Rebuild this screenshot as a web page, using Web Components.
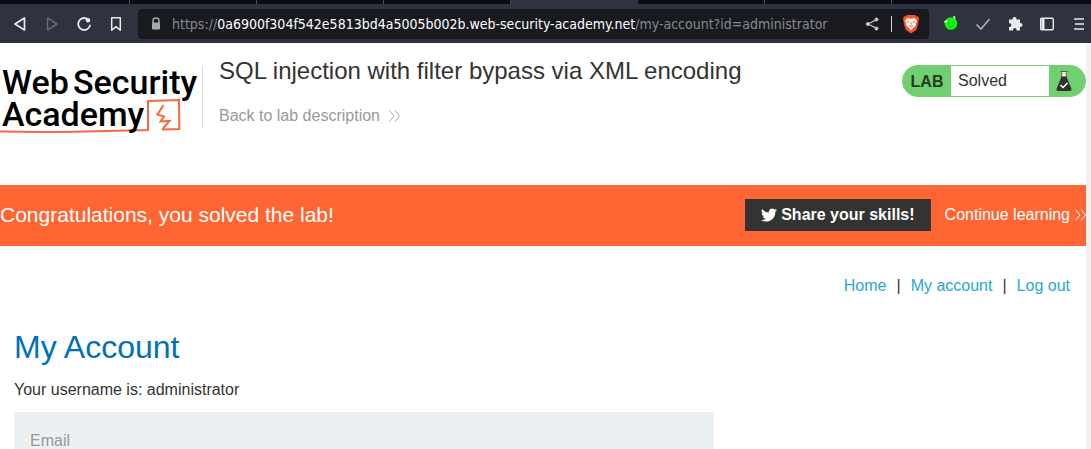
<!DOCTYPE html>
<html lang="en">
<head>
<meta charset="utf-8">
<title>SQL injection with filter bypass via XML encoding</title>
<style>
html, body { height: 100%; margin: 0; }
body { overflow: hidden; background: #fff; color: #333332; font: 16px/24px "Liberation Sans", Arial, sans-serif; }
</style>
</head>
<body>
<browser-window>
  <browser-toolbar slot="chrome"></browser-toolbar>
  <lab-header>
    <academy-logo slot="logo"></academy-logo>
    <span slot="title">SQL injection with filter bypass via XML encoding</span>
    <lab-status slot="status">Solved</lab-status>
  </lab-header>
  <solved-banner>Congratulations, you solved the lab!</solved-banner>
  <account-nav></account-nav>
  <account-page><span slot="user">administrator</span></account-page>
</browser-window>

<script>
function define(name, html) {
  const template = document.createElement('template');
  template.innerHTML = html;
  customElements.define(name, class extends HTMLElement {
    constructor() {
      super();
      this.attachShadow({ mode: 'open' }).append(template.content.cloneNode(true));
    }
  });
}

define('browser-window', `
<style>
:host { display: flex; flex-direction: column; height: 100vh; overflow: hidden; }
.view { display: flex; flex: 1; min-height: 0; }
.page { flex: 1; min-width: 0; overflow: hidden; }
.scroll { width: 5px; background: #f1f1f1; }
</style>
<slot name="chrome"></slot>
<div class="view"><div class="page"><slot></slot></div><div class="scroll"></div></div>`);

define('browser-toolbar', `
<style>
:host { display: block; flex: none; background: #31323f; font: 14px/20px "DejaVu Sans Condensed", "Noto Sans", sans-serif; color: #868a92; }
.tabs { display: flex; height: 4px; background: #0b0c15; }
.tabs i { flex: 0 0 127px; box-sizing: border-box; border-right: 1px solid #4a4b57; }
.tabs i:first-child { flex-basis: 130px; }
.tabs .on { background: #31323f; border: 0; }
.bar { display: flex; align-items: center; height: 39px; padding-left: 4px; box-sizing: border-box; }
button { display: grid; place-items: center; width: 32px; height: 32px; padding: 0; border: 0; background: none; color: #e9eaee; flex: none; }
.menu { width: 28px; justify-content: start; padding-left: 8px; }
.dim { color: #686a76; }
.address { display: flex; align-items: center; flex: 1; min-width: 0; height: 30px; margin: 0 6px; padding: 0 2px 0 12px; border-radius: 4px; background: #181a20; }
.lock { flex: none; margin-right: 10px; }
.url { flex: 1; min-width: 0; white-space: nowrap; overflow: hidden; }
.url b { font-weight: 400; color: #fff; }
.rule { width: 1px; height: 16px; background: #cfd0d4; margin: 0 3px; }
svg { display: block; }
</style>
<div class="tabs"><i></i><i></i><i></i><i></i><i class="on"></i><i></i><i></i></div>
<div class="bar">
  <button aria-label="Back"><svg width="16" height="16" fill="none" stroke="currentColor" stroke-width="1.7" stroke-linejoin="round"><path d="M12.5 2v12L3 8z"/></svg></button>
  <button class="dim" aria-label="Forward"><svg width="16" height="16" fill="none" stroke="currentColor" stroke-width="1.5" stroke-linejoin="round"><path d="M3.5 2v12L13 8z"/></svg></button>
  <button aria-label="Reload"><svg width="16" height="16" fill="none" stroke="currentColor" stroke-width="1.8" stroke-linecap="round"><path d="M11 2.700A6 6 0 1 0 14 9.500"/><circle cx="12" cy="4.300" r="2.200" fill="currentColor" stroke="none"/></svg></button>
  <button aria-label="Bookmark"><svg width="16" height="16" fill="none" stroke="currentColor" stroke-width="1.5" stroke-linejoin="round"><path d="M3.700 1.700h8.600v12.600L8 10.600l-4.300 3.700z"/></svg></button>
  <div class="address">
    <svg class="lock" width="12" height="14"><path d="M3 6V4a3 3 0 0 1 6 0v2" fill="none" stroke="#a5a8af" stroke-width="1.500"/><rect x="2" y="5.500" width="8" height="7" rx="1" fill="#a5a8af"/></svg>
    <span class="url" role="textbox" aria-label="Address">https://<b>0a6900f304f542e5813bd4a5005b002b.web-security-academy.net</b>/my-account?id=administrator</span>
    <button aria-label="Share"><svg width="14" height="14" fill="#c8cad0" stroke="#c8cad0"><path d="M12 2.500L3 7l9 4.500" fill="none" stroke-width="1.300"/><circle cx="11.500" cy="2.500" r="1.500"/><circle cx="2.800" cy="7" r="1.500"/><circle cx="11.500" cy="11.500" r="1.500"/></svg></button>
    <span class="rule"></span>
    <button aria-label="Brave Shields"><svg width="18" height="20"><path d="M5 1h8l1.500 1.500 1.500-.2L17 5l-.6 2 .1 1-2 7.500L9 19.500l-5.500-4L1.500 8l.1-1L1 5l1-2.700 1.500.2z" fill="#fb542b"/><path d="M5.500 4l3.500.8 3.500-.8 2.500 3-1.500 2.500.5 1.500-2.500 2.500L9 16.500l-2.500-3L4 11l.5-1.500L3 7z" fill="#fff"/><path d="M5 7.500l2.500.8M13 7.500l-2.500.8M9 8v3M7 11.700l2 .8 2-.8" stroke="#fb542b" stroke-width="1" fill="none"/></svg></button>
  </div>
  <button aria-label="Green face extension"><svg width="16" height="16"><circle cx="8" cy="7.500" r="6.300" fill="#12f70c"/><path d="M1 5.500l2.500-1.500 1 1.500-2.500 1.500zM10 0l2 .5.500 2.500-1.500-.5z" fill="#eaffea"/><path d="M5 7.500l1.500-.3M9.500 6.500l2-.5M6 10.500q2.500 1 4-1" stroke="#09a412" fill="none"/></svg></button>
  <button aria-label="Check extension"><svg width="16" height="16" fill="none" stroke="#a9abb4" stroke-width="1.700"><path d="M1.500 8.500L6 13l8.500-10"/></svg></button>
  <button aria-label="Extensions"><svg width="16" height="16" fill="currentColor"><path d="M2 3.500h3.500V3a2 2 0 0 1 4 0v.5H13V7h.5a2 2 0 0 1 0 4H13v3.500H9.500V13.700a1.700 1.700 0 0 0-3.400 0v.8H2V11h.5a1.900 1.900 0 0 0 0-3.800H2z"/></svg></button>
  <button aria-label="Sidebar"><svg width="16" height="16" fill="none" stroke="currentColor" stroke-width="1.400"><rect x="1.700" y="2.200" width="12.600" height="11.600" rx="1"/><path d="M4 2.500v11" stroke-width="3"/></svg></button>
  <button class="menu" aria-label="Menu"><svg width="16" height="16" stroke="currentColor" stroke-width="1.700"><path d="M3 3h10M4 8h9M3 13h10"/></svg></button>
</div>`);

define('academy-logo', `
<style>
:host { display: block; width: 202px; height: 88px; }
svg { display: block; }
text { font: 500 34px Roboto, sans-serif; fill: #000; }
</style>
<svg width="202" height="88" role="img" aria-label="Web Security Academy">
  <path d="M0 81.500q35 .8 74 .2l74-1.700V51l31-1 .3 29-17.300.5" fill="none" stroke="#f4693d" stroke-width="2"/>
  <path d="M163.500 55l-6 9.500 6.500 2-3.500 5 9-.5-7 8" fill="none" stroke="#f4693d" stroke-width="2"/>
  <text x="2" y="44">Web</text><text x="73" y="44">Security</text>
  <text x="2" y="76">Academy</text>
</svg>`);

define('lab-header', `
<style>
:host { display: flex; align-items: flex-start; box-sizing: border-box; min-height: 142px; padding-top: 7px; }
.info { flex: 1; min-width: 0; box-sizing: border-box; border-left: 1px solid #dcdcdc; padding-left: 16px; margin-top: 16px; height: 62px; display: flex; flex-direction: column; justify-content: space-between; }
h2 { margin: -11px 0 0; font-size: 24px; line-height: 32px; font-weight: 400; }
a { color: #999; text-decoration: none; display: flex; align-items: center; gap: 8px; }
.status { margin-top: 15px; }
</style>
<div class="logo"><slot name="logo"></slot></div>
<div class="info">
  <h2><slot name="title"></slot></h2>
  <a href="#lab">Back to lab description <svg width="13" height="14" fill="none" stroke="#aaa"><path d="M1.500 1.500L6 7l-4.500 5.500M7 1.500L11.500 7 7 12.500"/></svg></a>
</div>
<div class="status"><slot name="status"></slot></div>`);

define('lab-status', `
<style>
:host { display: flex; align-items: stretch; box-sizing: border-box; width: 184px; height: 32px; border-radius: 16px; border: 1px solid #70cf70; background: #70cf70; overflow: hidden; }
b { width: 48px; line-height: 32px; text-align: center; color: #263b26; }
span { flex: 1; background: #fff; padding-left: 7px; line-height: 30px; }
svg { width: 36px; height: 30px; }
</style>
<b>LAB</b><span><slot></slot></span>
<svg viewBox="0 0 36 30" role="img" aria-label="Flask"><path d="M12.500 6h5v4.500h-5z" fill="#fff"/><path d="M11.500 5.500h7M12.800 6v5M17.200 6v5" stroke="#555" fill="none"/><path d="M12.500 10.500h5l5 12.500q.5 2-1.500 2H9q-2 0-1.500-2z" fill="#333332"/><path d="M11.500 19l2.500 2.500 4.500-4.500" stroke="#fff" stroke-width="1.500" fill="none"/></svg>`);

define('solved-banner', `
<style>
:host { display: flex; align-items: center; box-sizing: border-box; min-height: 61px; padding-bottom: 2px; background: #ff6633; color: #fff; white-space: nowrap; }
p { flex: 1; margin: 0; font-size: 21px; line-height: 28px; }
button { display: flex; align-items: center; gap: 4px; height: 32px; margin: 0 14px 0 0; padding: 0 16px; border: 0; background: #333332; color: #fff; font: bold 16px/24px "Liberation Sans", Arial, sans-serif; }
a { display: flex; align-items: center; gap: 4px; color: #fff; text-decoration: none; }
</style>
<p><slot></slot></p>
<button><svg width="16" height="16" viewBox="0 0 24 24" fill="#fff"><path d="M24 4.560a9.830 9.830 0 0 1-2.830.78 4.930 4.930 0 0 0 2.170-2.730 9.860 9.860 0 0 1-3.130 1.200 4.920 4.920 0 0 0-8.390 4.480A13.980 13.980 0 0 1 1.670 3.150a4.920 4.920 0 0 0 1.520 6.570 4.900 4.900 0 0 1-2.230-.61v.06a4.930 4.930 0 0 0 3.950 4.830 4.930 4.930 0 0 1-2.220.08 4.930 4.930 0 0 0 4.600 3.420A9.870 9.870 0 0 1 0 19.540a13.940 13.940 0 0 0 7.550 2.210c9.140 0 14.300-7.720 13.990-14.650A10.020 10.020 0 0 0 24 4.560z"/></svg>Share your skills!</button>
<a href="#learn">Continue learning <svg width="12" height="14" fill="none" stroke="#fff"><path d="M1.500 1.500L6 7l-4.500 5.500M7 1.500L11.500 7 7 12.500"/></svg></a>`);

define('account-nav', `
<style>
:host { display: block; padding: 28px 16px 0 0; }
nav { display: flex; justify-content: flex-end; gap: 10px; }
a { color: #29a7d3; text-decoration: none; }
</style>
<nav><a href="#home">Home</a><span>|</span><a href="#account">My account</a><span>|</span><a href="#logout">Log out</a></nav>`);

define('account-page', `
<style>
:host { display: block; padding: 28px 16px 0 14px; }
h1 { margin: 0; font-size: 32px; line-height: 42px; font-weight: 400; color: #0071b5; }
p { margin: 10px 0; }
form { display: block; max-width: 700px; box-sizing: border-box; padding: 17px 16px; background: #ebf0f3; }
label { display: block; color: #999; margin-bottom: 8px; }
input { display: block; width: 100%; height: 40px; box-sizing: border-box; border: 1px solid #ccc; }
</style>
<h1>My Account</h1>
<p>Your username is: <slot name="user"></slot></p>
<form><label for="email">Email</label><input id="email" type="email"></form>`);
</script>
</body>
</html>
